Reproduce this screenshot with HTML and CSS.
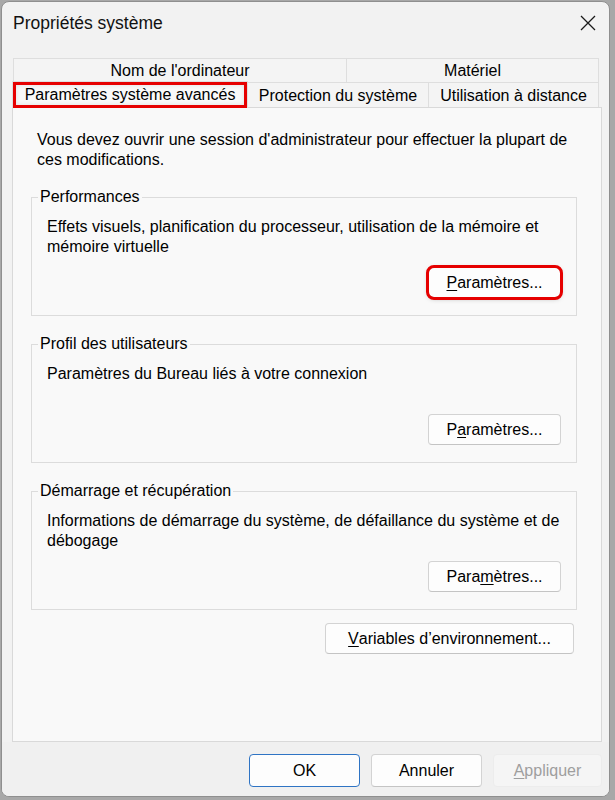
FILE: index.html
```html
<!DOCTYPE html>
<html lang="fr">
<head>
<meta charset="utf-8">
<title>Propriétés système</title>
<link rel="stylesheet" href="styles.css">
</head>
<body>
<div class="window">
  <div class="titlebar">
    <span class="title">Propriétés système</span>
    <svg class="close" viewBox="0 0 16 16" aria-label="Fermer"><path d="M1 1 L15 15 M15 1 L1 15" stroke="#1a1a1a" stroke-width="1.3" fill="none"/></svg>
  </div>
  <div class="content">
    <div class="tabs">
      <div class="tab-row row1">
        <div class="tab t-name">Nom de l'ordinateur</div>
        <div class="tab t-hw">Matériel</div>
      </div>
      <div class="tab-row row2">
        <div class="tab t-adv">Paramètres système avancés</div>
        <div class="tab t-prot">Protection du système</div>
        <div class="tab t-remote">Utilisation à distance</div>
      </div>
    </div>
    <div class="panel">
      <p class="intro">Vous devez ouvrir une session d'administrateur pour effectuer la plupart de ces modifications.</p>
      <fieldset class="group">
        <legend>Performances</legend>
        <p class="desc">Effets visuels, planification du processeur, utilisation de la mémoire et mémoire virtuelle</p>
        <div class="actions"><button class="btn btn-param highlight"><u>P</u>aramètres...</button></div>
      </fieldset>
      <fieldset class="group">
        <legend>Profil des utilisateurs</legend>
        <p class="desc">Paramètres du Bureau liés à votre connexion</p>
        <div class="actions"><button class="btn btn-param">P<u>a</u>ramètres...</button></div>
      </fieldset>
      <fieldset class="group">
        <legend>Démarrage et récupération</legend>
        <p class="desc">Informations de démarrage du système, de défaillance du système et de débogage</p>
        <div class="actions"><button class="btn btn-param">Para<u>m</u>ètres...</button></div>
      </fieldset>
      <div class="env-row"><button class="btn btn-env"><u>V</u>ariables d’environnement...</button></div>
    </div>
  </div>
  <div class="footer">
    <button class="btn btn-foot ok">OK</button>
    <button class="btn btn-foot">Annuler</button>
    <button class="btn btn-foot disabled"><u>A</u>ppliquer</button>
  </div>
</div>
</body>
</html>
```
FILE: styles.css
```css
html, body {
  margin: 0;
  background: #a8a8a8;
}
body {
  font-family: "Liberation Sans", Arial, sans-serif;
  font-size: 16px;
  color: #000;
}
.window {
  box-sizing: border-box;
  width: 609px;
  height: 796px;
  margin: 1px 0 0 1px;
  border: 1px solid #8f8f8f;
  border-radius: 8px;
  background: #f2f2f2;
  display: flex;
  flex-direction: column;
  overflow: hidden;
}
.titlebar {
  height: 42px;
  flex: none;
  display: flex;
  align-items: center;
  justify-content: space-between;
  padding: 0 13px 0 11px;
}
.title {
  font-size: 17.5px;
  color: #111;
}
.close {
  width: 16px;
  height: 16px;
}
.content {
  flex: 1;
  min-height: 0;
  display: flex;
  flex-direction: column;
  padding: 14px 7px 0 10px;
}
.tabs {
  flex: none;
}
.tab-row {
  display: flex;
}
.row1 {
  height: 24px;
  margin-left: 1px;
}
.row2 {
  height: 25px;
  align-items: flex-start;
}
.tab {
  box-sizing: border-box;
  border: 1px solid #dedede;
  border-bottom: none;
  background: #f4f4f4;
  display: flex;
  align-items: center;
  justify-content: center;
  white-space: nowrap;
}
.row1 .tab {
  height: 24px;
}
.row2 .tab {
  height: 25px;
  padding-top: 2px;
}
.tab + .tab {
  margin-left: -1px;
}
.t-name { width: 334px; }
.t-hw { width: 253px; }
.row2 .t-adv {
  width: 236px;
  height: 27px;
  margin-top: -1px;
  position: relative;
  z-index: 1;
  background: #f9f9f9;
  padding-top: 0;
  padding-bottom: 1px;
  box-shadow: inset 0 0 0 3px #e60000, inset 0 0 5px 3px rgba(0, 0, 0, 0.10);
}
.t-prot { width: 182px; }
.t-remote { width: 171px; }

.panel {
  flex: 1;
  border: 1px solid #d9d9d9;
  background: #f9f9f9;
  padding: 22px 24px 0 18px;
  display: flex;
  flex-direction: column;
}
.intro {
  margin: 0 0 0 6px;
  line-height: 20px;
}
.group {
  margin: 17px 0 0 0;
  padding: 0 15px 17px 6px;
  border: 1px solid #dcdcdc;
  min-width: 0;
}
.group + .group {
  margin-top: 18px;
}
.group legend {
  padding: 0 2px;
  line-height: 20px;
}
.desc {
  margin: 10px -12px 0 9px;
  line-height: 20px;
  min-height: 40px;
}
.actions {
  display: flex;
  justify-content: flex-end;
  margin-top: 10px;
}
.btn {
  box-sizing: border-box;
  font: inherit;
  color: #000;
  background: #fdfdfd;
  border: 1px solid #d3d3d3;
  border-bottom-color: #c4c4c4;
  border-radius: 4px;
  padding: 0;
  display: flex;
  align-items: center;
  justify-content: center;
}
.btn u {
  text-underline-offset: 2px;
}
.btn-param {
  width: 133px;
  height: 31px;
}
.highlight {
  outline: 3px solid #e60000;
  outline-offset: -1px;
  border-radius: 6px;
  box-shadow: 0 1px 5px rgba(0, 0, 0, 0.25);
}
.env-row {
  display: flex;
  justify-content: flex-end;
  margin: 13px 3px 0 0;
}
.btn-env {
  width: 249px;
  height: 31px;
}
.footer {
  flex: none;
  height: 54px;
  box-sizing: border-box;
  display: flex;
  justify-content: flex-end;
  align-items: flex-start;
  gap: 11px;
  padding: 12px 7px 0 0;
  background: #f0f0f0;
}
.btn-foot {
  width: 111px;
  height: 33px;
}
.ok {
  border: 1px solid #2f74c4;
}
.disabled {
  width: 109px;
  background: #f5f5f5;
  border-color: #ececec;
  color: #9e9e9e;
}
```
